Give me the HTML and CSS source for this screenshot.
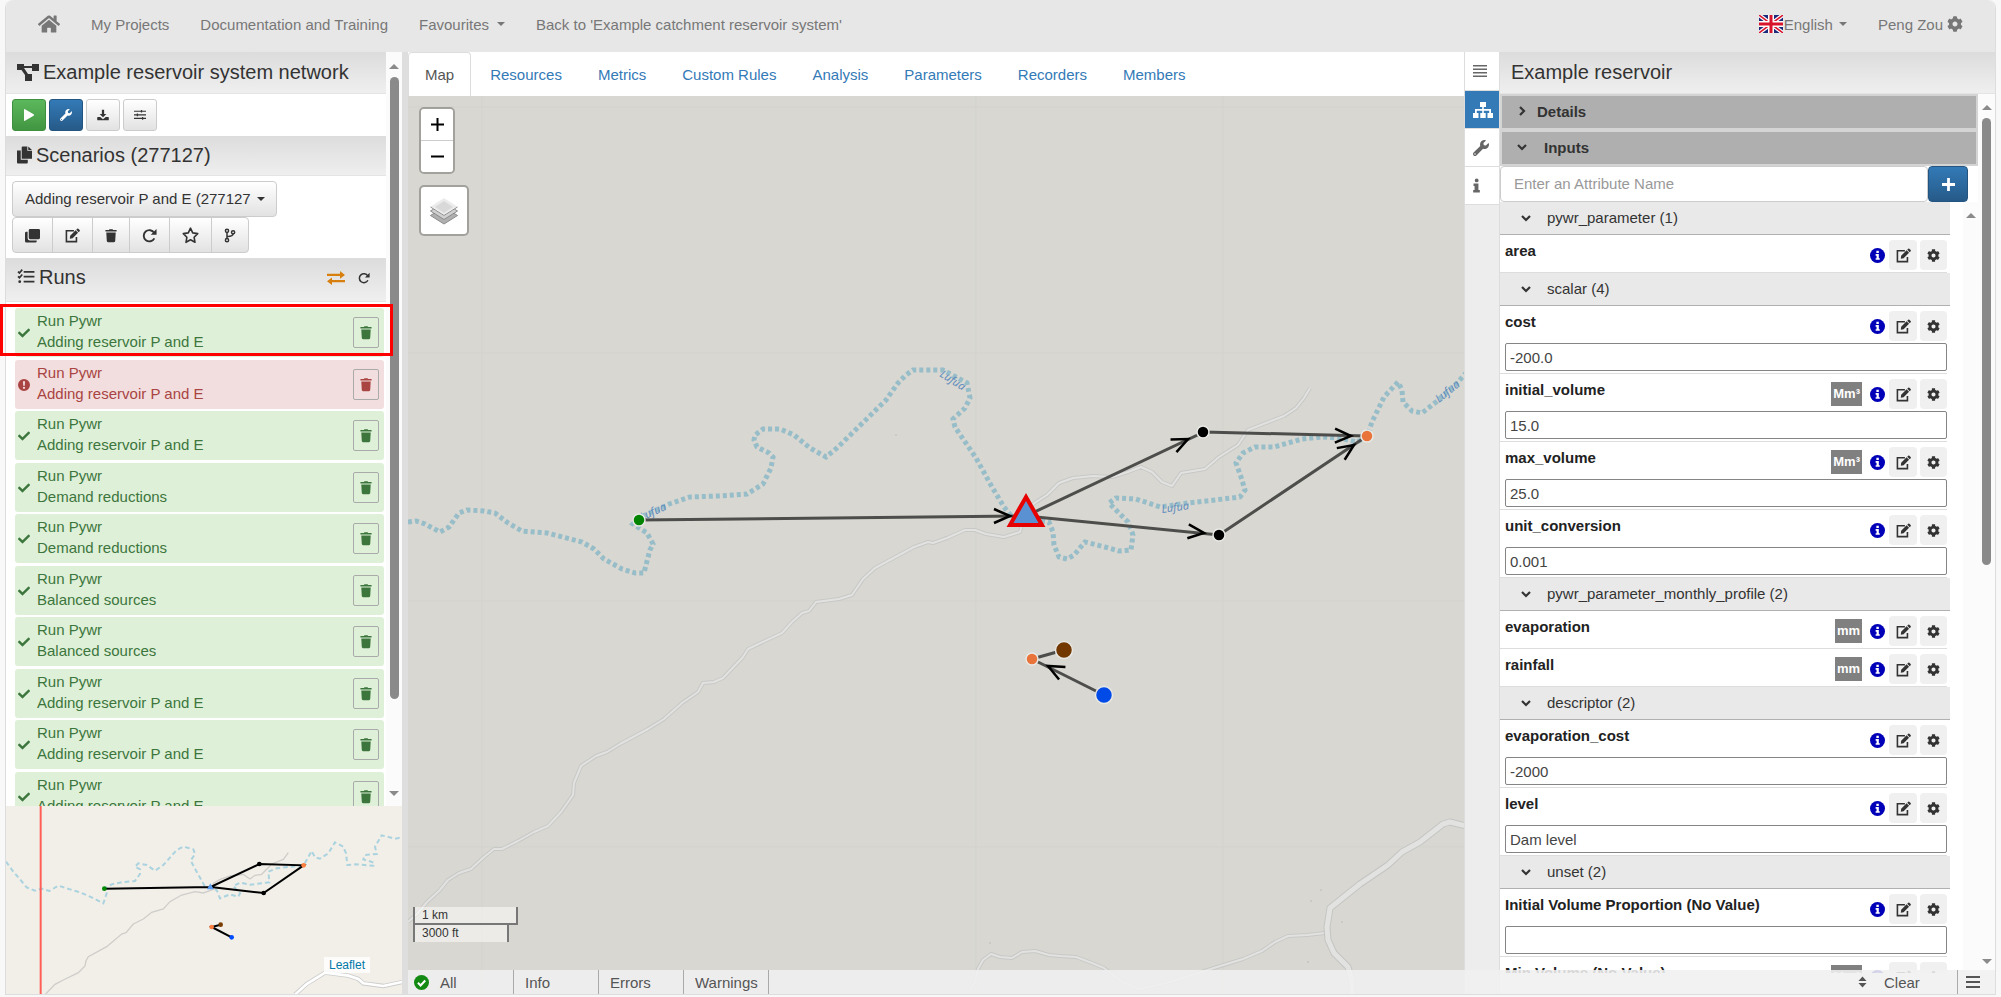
FILE: index.html
```html
<!DOCTYPE html>
<html lang="en">
<head>
<meta charset="utf-8">
<title>Example reservoir system network</title>
<link rel="stylesheet" href="styles.css">
</head>
<body>
<svg class="sprite" aria-hidden="true">
  <symbol id="i-home" viewBox="0 0 576 512"><path d="M280.37 148.26L96 300.11V464a16 16 0 0 0 16 16l112.06-.29a16 16 0 0 0 15.92-16V368a16 16 0 0 1 16-16h64a16 16 0 0 1 16 16v95.64a16 16 0 0 0 16 16.05L464 480a16 16 0 0 0 16-16V300L295.67 148.26a12.19 12.19 0 0 0-15.3 0zM571.6 251.47L488 182.56V44.05a12 12 0 0 0-12-12h-56a12 12 0 0 0-12 12v72.61L318.47 43a48 48 0 0 0-61 0L4.34 251.47a12 12 0 0 0-1.6 16.9l25.5 31A12 12 0 0 0 45.15 301l235.22-193.74a12.19 12.19 0 0 1 15.3 0L530.9 301a12 12 0 0 0 16.9-1.6l25.5-31a12 12 0 0 0-1.7-16.93z"/></symbol>
  <symbol id="i-gear" viewBox="0 0 512 512"><path d="M487.4 315.7l-42.6-24.6c4.3-23.2 4.3-47 0-70.2l42.6-24.6c4.9-2.8 7.1-8.6 5.5-14-11.1-35.6-30-67.8-54.7-94.6-3.8-4.1-10-5.1-14.8-2.3L380.8 110c-17.9-15.4-38.5-27.3-60.8-35.1V25.8c0-5.6-3.9-10.5-9.4-11.7-36.7-8.2-74.3-7.8-109.2 0-5.5 1.2-9.4 6.1-9.4 11.7V75c-22.2 7.9-42.8 19.8-60.8 35.1L88.7 85.5c-4.9-2.8-11-1.9-14.8 2.3-24.7 26.7-43.6 58.9-54.7 94.6-1.7 5.4.6 11.2 5.5 14L67.3 221c-4.3 23.2-4.3 47 0 70.2l-42.6 24.6c-4.9 2.8-7.1 8.6-5.5 14 11.1 35.6 30 67.8 54.7 94.6 3.8 4.1 10 5.1 14.8 2.3l42.6-24.6c17.9 15.4 38.5 27.3 60.8 35.1v49.2c0 5.6 3.9 10.5 9.4 11.7 36.7 8.2 74.3 7.8 109.2 0 5.5-1.2 9.4-6.1 9.4-11.7v-49.2c22.2-7.9 42.8-19.8 60.8-35.1l42.6 24.6c4.9 2.8 11 1.9 14.8-2.3 24.7-26.7 43.6-58.9 54.7-94.6 1.5-5.5-.7-11.3-5.6-14.1zM256 336c-44.1 0-80-35.9-80-80s35.9-80 80-80 80 35.9 80 80-35.9 80-80 80z"/></symbol>
  <symbol id="i-wrench" viewBox="0 0 512 512"><path d="M507.73 109.1c-2.24-9.03-13.54-12.09-20.12-5.51l-74.36 74.36-67.88-11.31-11.31-67.88 74.36-74.36c6.62-6.62 3.43-17.9-5.66-20.16-47.38-11.74-99.55.91-136.58 37.93-39.64 39.64-50.55 97.1-34.05 147.2L18.74 402.76c-24.99 24.99-24.99 65.51 0 90.5 24.99 24.99 65.51 24.99 90.5 0l213.21-213.21c50.12 16.71 107.47 5.68 147.37-34.22 37.07-37.07 49.7-89.32 37.91-136.73zM64 472c-13.25 0-24-10.75-24-24 0-13.26 10.75-24 24-24s24 10.74 24 24c0 13.25-10.75 24-24 24z"/></symbol>
  <symbol id="i-check" viewBox="0 0 512 512"><path d="M173.898 439.404l-166.4-166.4c-9.997-9.997-9.997-26.206 0-36.204l36.203-36.204c9.997-9.998 26.207-9.998 36.204 0L192 312.69 432.095 72.596c9.997-9.997 26.207-9.997 36.204 0l36.203 36.204c9.997 9.997 9.997 26.206 0 36.204l-294.4 294.401c-9.998 9.997-26.207 9.997-36.204-.001z"/></symbol>
  <symbol id="i-alert" viewBox="0 0 16 16"><path fill-rule="evenodd" d="M8 0a8 8 0 1 0 0 16A8 8 0 0 0 8 0zM6.6 3h2.8L9 9H7zM8 10.2a1.5 1.5 0 1 1 0 3 1.5 1.5 0 0 1 0-3z"/></symbol>
  <symbol id="i-okay" viewBox="0 0 16 16"><circle cx="8" cy="8" r="8"/><path d="M4.2 8.3l2.8 2.8 5-5.2" fill="none" stroke="#fff" stroke-width="2.2"/></symbol>
  <symbol id="i-about" viewBox="0 0 16 16"><circle cx="8" cy="8" r="8"/><path fill="#fff" d="M6.8 3h2.6v2.4H6.8zM6 6.4h3.4v4.4h1v1.8H6v-1.8h1V8.2H6z"/></symbol>
  <symbol id="i-info" viewBox="0 0 8 16"><path d="M4.2 0a2.2 2.2 0 1 1 0 4.4 2.2 2.2 0 0 1 0-4.4zM.6 5.8h5.6v7.4h1.6V16H.2v-2.8h1.6V8.6H.6z"/></symbol>
  <symbol id="i-network" viewBox="0 0 22 18"><path d="M0 1h7v2h8V1h7v7h-7V5H7l4 6h4v7H8v-6L4.500 7H0z"/></symbol>
  <symbol id="i-play" viewBox="0 0 10 12"><path d="M0 .6Q0-.3 1 .2l8.600 5.100q.8.700 0 1.400L1 11.800q-1 .4-1-.5z"/></symbol>
  <symbol id="i-download" viewBox="0 0 16 16"><path d="M6.500 1h3v5.500h3L8 11 3.500 6.500h3zM1 10.500h3.300L8 13.500l3.700-3H15q.7 0 .7.700v3q0 .8-.7.800H1q-.7 0-.7-.8v-3q0-.7.7-.7z"/></symbol>
  <symbol id="i-sliders" viewBox="0 0 16 14"><path fill="none" stroke="currentColor" stroke-width="1.600" d="M0 2h16M0 6.800h16M0 11.600h16M10 .2v3.600M4.500 5v3.600M11.500 9.800v3.600"/></symbol>
  <symbol id="i-copy" viewBox="0 0 16 18"><path d="M6 0h5v4.500h5V13H5V1q0-1 1-1zM12 0l4 3.700h-4zM0 4.200h4V14h7.500v3q0 1-1 1H1q-1 0-1-1z"/></symbol>
  <symbol id="i-clone" viewBox="0 0 16 16"><path d="M5.500 1h9Q16 1 16 2.500v8q0 1.500-1.500 1.500h-9Q4 12 4 10.500v-8Q4 1 5.500 1zM0 5.500Q0 4 1.500 4H2.800v7Q2.800 13.200 5 13.200h7.500v.8q0 1.500-1.500 1.500H1.500Q0 15.500 0 14z"/></symbol>
  <symbol id="i-edit" viewBox="0 0 16 16"><path fill="none" stroke="currentColor" stroke-width="1.700" d="M9.500 3H1.500v11.500h10.700V9.500"/><path d="M5.500 8.300l5.800-5.800 2.600 2.600-5.800 5.800-3 .5zM12 1.800l1-1q.6-.5 1.200 0l1.400 1.400q.5.600 0 1.200l-1 1z"/></symbol>
  <symbol id="i-trash" viewBox="0 0 14 16"><path d="M.5 1.500h4L5.200.6h3.600l.7.900h4v1.800H.5zM1.500 4.500h11l-.6 10q-.1 1.300-1.400 1.300h-7q-1.300 0-1.400-1.300z"/></symbol>
  <symbol id="i-redo" viewBox="0 0 16 16"><path fill="none" stroke="currentColor" stroke-width="2" d="M13 5.200A6 6 0 1 0 13.200 11"/><path d="M15.500 1v6.300H9.300z"/></symbol>
  <symbol id="i-star" viewBox="0 0 17 17"><path fill="none" stroke="currentColor" stroke-width="1.600" stroke-linejoin="round" d="M8.500 1.200l2.200 4.700 5 .7-3.600 3.600.9 5.100-4.500-2.500L4 15.300l.9-5.100L1.300 6.600l5-.7z"/></symbol>
  <symbol id="i-branch" viewBox="0 0 12 16"><g fill="none" stroke="currentColor" stroke-width="1.600"><circle cx="2.800" cy="3" r="1.700"/><circle cx="2.800" cy="13" r="1.700"/><circle cx="9.300" cy="4.500" r="1.700"/><path d="M2.800 4.700v6.600M9.300 6.200q0 2.800-6.300 3"/></g></symbol>
  <symbol id="i-tasks" viewBox="0 0 18 16"><path fill="none" stroke="currentColor" stroke-width="1.800" d="M6.500 3H18M6.500 8.200H18M6.500 13.500H18M.5 2.700l1.500 1.500L5 .7M.5 7.900l1.500 1.500 3-3.500"/><circle cx="2.300" cy="13.500" r="1.500"/></symbol>
  <symbol id="i-swap" viewBox="0 0 18 14"><path d="M0 2.800h13V0l5 3.900-5 3.900V5H0zM18 9H5V6.400L0 10.200 5 14v-2.800h13z"/></symbol>
  <symbol id="i-sitemap" viewBox="0 0 20 16"><path d="M7 0h6v5h-2.200v2H18v4h2v5h-5.500v-5h1.700V8.700h-5.400V11h1.900v5H7.300v-5h1.900V8.700H3.800V11h1.700v5H0v-5h2V7h7.200V5H7z"/></symbol>
  <symbol id="i-lines" viewBox="0 0 14 12"><path d="M0 0h14v1.600H0zM0 3.500h14v1.600H0zM0 7h14v1.600H0zM0 10.400h14V12H0z"/></symbol>
  <symbol id="i-bars" viewBox="0 0 14 12"><path d="M0 0h14v2H0zM0 5h14v2H0zM0 10h14v2H0z"/></symbol>
  <symbol id="i-plus" viewBox="0 0 14 14"><path d="M5.500 0h3v5.500H14v3H8.500V14h-3V8.500H0v-3h5.500z"/></symbol>
  <symbol id="i-down" viewBox="0 0 10 10"><path fill="none" stroke="currentColor" stroke-width="2.200" d="M1 3l4 4 4-4"/></symbol>
  <symbol id="i-right" viewBox="0 0 10 10"><path fill="none" stroke="currentColor" stroke-width="2.200" d="M3 1l4 4-4 4"/></symbol>
  <symbol id="i-sort" viewBox="0 0 10 12"><path d="M5 0l4.500 5h-9zM5 12L.5 7h9z"/></symbol>
</svg>

<div class="app">
  <header class="topbar">
    <nav class="topnav">
      <a class="toplink" href="#" aria-label="Home"><svg class="ic ic-home"><use href="#i-home"/></svg></a>
      <a class="toplink" href="#">My Projects</a>
      <a class="toplink" href="#">Documentation and Training</a>
      <button class="toplink" type="button">Favourites <span class="caret"></span></button>
      <a class="toplink" href="#">Back to 'Example catchment reservoir system'</a>
    </nav>
    <nav class="topnav">
      <button class="toplink lang" type="button">
        <svg class="flag" viewBox="0 0 24 18"><path fill="#1b2a7b" d="M0 0h24v18H0z"/><path stroke="#fff" stroke-width="4" d="M0 0l24 18M24 0L0 18"/><path stroke="#d8142c" stroke-width="1.500" d="M0 0l24 18M24 0L0 18"/><path stroke="#fff" stroke-width="6" d="M12 0v18M0 9h24"/><path stroke="#d8142c" stroke-width="3" d="M12 0v18M0 9h24"/></svg>English <span class="caret"></span>
      </button>
      <button class="toplink user" type="button">Peng Zou <svg class="ic ic-16"><use href="#i-gear"/></svg></button>
    </nav>
  </header>

  <main class="workspace">
    <aside class="sidebar">
      <div class="side-scroll">
        <div class="side-body">
          <h1 class="head"><svg class="ic ic-net"><use href="#i-network"/></svg>Example reservoir system network</h1>
          <div class="tools">
            <button class="btn btn-green" type="button" aria-label="Run"><svg class="ic ic-play"><use href="#i-play"/></svg></button>
            <button class="btn btn-blue" type="button" aria-label="Tools"><svg class="ic ic-12"><use href="#i-wrench"/></svg></button>
            <button class="btn" type="button" aria-label="Download"><svg class="ic ic-12"><use href="#i-download"/></svg></button>
            <button class="btn" type="button" aria-label="Settings"><svg class="ic ic-12"><use href="#i-sliders"/></svg></button>
          </div>
          <h2 class="head head-scen"><svg class="ic ic-copy"><use href="#i-copy"/></svg>Scenarios (277127)</h2>
          <div class="scenario">
            <div class="picker">
              <select class="picker-box" aria-label="Scenario"><option>Adding reservoir P and E (277127</option></select>
              <span class="caret picker-caret"></span>
            </div>
            <div class="btn-group">
              <button class="gbtn" type="button" aria-label="Clone"><svg class="ic ic-15"><use href="#i-clone"/></svg></button>
              <button class="gbtn" type="button" aria-label="Edit"><svg class="ic ic-15"><use href="#i-edit"/></svg></button>
              <button class="gbtn" type="button" aria-label="Delete"><svg class="ic ic-slim"><use href="#i-trash"/></svg></button>
              <button class="gbtn" type="button" aria-label="Refresh"><svg class="ic ic-15"><use href="#i-redo"/></svg></button>
              <button class="gbtn" type="button" aria-label="Favourite"><svg class="ic ic-17"><use href="#i-star"/></svg></button>
              <button class="gbtn" type="button" aria-label="Branch"><svg class="ic ic-slim"><use href="#i-branch"/></svg></button>
            </div>
          </div>
          <h2 class="head head-runs"><svg class="ic ic-tasks"><use href="#i-tasks"/></svg>Runs
            <span class="head-actions"><button class="bare orange" type="button" aria-label="Compare"><svg class="ic ic-swap"><use href="#i-swap"/></svg></button><button class="bare" type="button" aria-label="Reload runs"><svg class="ic ic-12"><use href="#i-redo"/></svg></button></span>
          </h2>
          <ul class="runs">
            <li class="run"><svg class="ic run-ic"><use href="#i-check"/></svg><span class="run-text">Run Pywr<br>Adding reservoir P and E</span><button class="del" type="button" aria-label="Delete run"><svg class="ic ic-slim"><use href="#i-trash"/></svg></button><span class="highlight"></span></li>
            <li class="run failed"><svg class="ic run-ic"><use href="#i-alert"/></svg><span class="run-text">Run Pywr<br>Adding reservoir P and E</span><button class="del" type="button" aria-label="Delete run"><svg class="ic ic-slim"><use href="#i-trash"/></svg></button></li>
            <li class="run"><svg class="ic run-ic"><use href="#i-check"/></svg><span class="run-text">Run Pywr<br>Adding reservoir P and E</span><button class="del" type="button" aria-label="Delete run"><svg class="ic ic-slim"><use href="#i-trash"/></svg></button></li>
            <li class="run"><svg class="ic run-ic"><use href="#i-check"/></svg><span class="run-text">Run Pywr<br>Demand reductions</span><button class="del" type="button" aria-label="Delete run"><svg class="ic ic-slim"><use href="#i-trash"/></svg></button></li>
            <li class="run"><svg class="ic run-ic"><use href="#i-check"/></svg><span class="run-text">Run Pywr<br>Demand reductions</span><button class="del" type="button" aria-label="Delete run"><svg class="ic ic-slim"><use href="#i-trash"/></svg></button></li>
            <li class="run"><svg class="ic run-ic"><use href="#i-check"/></svg><span class="run-text">Run Pywr<br>Balanced sources</span><button class="del" type="button" aria-label="Delete run"><svg class="ic ic-slim"><use href="#i-trash"/></svg></button></li>
            <li class="run"><svg class="ic run-ic"><use href="#i-check"/></svg><span class="run-text">Run Pywr<br>Balanced sources</span><button class="del" type="button" aria-label="Delete run"><svg class="ic ic-slim"><use href="#i-trash"/></svg></button></li>
            <li class="run"><svg class="ic run-ic"><use href="#i-check"/></svg><span class="run-text">Run Pywr<br>Adding reservoir P and E</span><button class="del" type="button" aria-label="Delete run"><svg class="ic ic-slim"><use href="#i-trash"/></svg></button></li>
            <li class="run"><svg class="ic run-ic"><use href="#i-check"/></svg><span class="run-text">Run Pywr<br>Adding reservoir P and E</span><button class="del" type="button" aria-label="Delete run"><svg class="ic ic-slim"><use href="#i-trash"/></svg></button></li>
            <li class="run"><svg class="ic run-ic"><use href="#i-check"/></svg><span class="run-text">Run Pywr<br>Adding reservoir P and E</span><button class="del" type="button" aria-label="Delete run"><svg class="ic ic-slim"><use href="#i-trash"/></svg></button></li>
          </ul>
        </div>
        <div class="bar side-bar"><span class="arrow-up"></span><span class="thumb"></span><span class="arrow-down"></span></div>
      </div>
      <div class="minimap">
        <svg class="fill" viewBox="18 618 1188 564" preserveAspectRatio="xMinYMin slice" fill="none">
          <path class="mini-road" d="M137 1182L165 1153L190 1140L235 1118L255 1098L258 1082L265 1070L320 1040L365 1002L378 998L400 972L430 957L455 937L490 927L510 905L545 885L585 875L610 879L640 868L640 850L660 838L690 828L730 823L750 837L765 826L785 823L800 808L815 792L850 778L865 758"/>
          <path stroke="#ccc" stroke-width="13" d="M885 1184L920 1152L975 1118L1045 1127L1075 1137L1090 1150L1150 1158L1206 1146"/>
          <path stroke="#fff" stroke-width="8" d="M885 1184L920 1152L975 1118L1045 1127L1075 1137L1090 1150L1150 1158L1206 1146"/>
          <path class="mini-river" d="M18 785L40 815L60 838L80 862L105 872L125 866L148 873L175 857L210 868L240 877L275 892L310 910L320 880L313 866L335 853L370 846L405 843L420 822L420 808L405 800L415 790L440 795L465 812L490 795L530 750L550 740L580 748L585 762L572 782L590 815L615 860L650 870L660 895L690 883L715 890L720 880L700 858L720 848L750 854L808 847L805 815L830 805L911 796L935 753L945 772L960 776L985 760L1005 727L1030 740L1038 760L1042 795L1065 793L1120 797L1122 788L1090 778L1095 765L1130 762L1125 740L1145 706L1185 716L1200 713"/>
          <path stroke="#000" stroke-width="6" d="M313 866L632 861L778 792L911 796L791 879L632 861M662 974L635 981L695 1012"/>
          <circle cx="313" cy="866" r="7" fill="#080"/><circle cx="778" cy="792" r="7" fill="#000"/><circle cx="791" cy="879" r="7" fill="#000"/><circle cx="911" cy="796" r="7" fill="#ff7f3f"/><circle cx="635" cy="981" r="7" fill="#ff7f3f"/><circle cx="662" cy="974" r="7" fill="#7a3c00"/><circle cx="695" cy="1012" r="7" fill="#004cff"/><path fill="#5c9df0" d="M631 850l10 18h-20z"/>
          <path stroke="#ff5f57" stroke-width="6" d="M122 618v564"/>
        </svg>
        <a class="leaflet" href="#">Leaflet</a>
      </div>
    </aside>

    <div class="splitter"></div>

    <section class="center">
      <nav class="tabs">
        <a class="tab active" href="#">Map</a><a class="tab" href="#">Resources</a><a class="tab" href="#">Metrics</a><a class="tab" href="#">Custom Rules</a><a class="tab" href="#">Analysis</a><a class="tab" href="#">Parameters</a><a class="tab" href="#">Recorders</a><a class="tab" href="#">Members</a>
      </nav>
      <div class="map">
        <svg class="fill" viewBox="408 96 1056 898" preserveAspectRatio="xMinYMin slice" fill="none">
          <defs>
            <path id="road" d="M408 922L418 913L427 902L439 891L448 880L459 873L471 869L484 857L494 849L502 849L518 841L534 832L548 826L561 812L573 795L574 783L581 766L596 756L607 752L620 744L648 729L664 719L682 703L698 692L703 683L714 682L723 678L743 657L748 649L782 633L792 622L802 613L809 611L816 602L839 599L852 595L863 579L875 568L914 547L928 542L933 543L947 538L965 530L975 530L986 534L1004 537L1020 532L1026 510L1036 502L1047 495L1059 483L1073 478L1093 476L1112 477L1128 472L1141 467L1152 472L1162 482L1172 486L1181 473L1205 469L1219 457L1238 445L1248 430L1284 416L1296 408L1304 398L1310 388M1325 933L1307 935L1288 936L1275 942L1262 951L1243 959L1217 967L1170 982L1140 989L1122 982L1104 968L1092 963L1076 957L1060 956L1049 955L1035 951L1022 952L1012 958L1000 957L991 954L983 960L978 969L975 982L970 990"/>
            <path id="highway" d="M1466 826L1450 822L1443 824L1420 842L1402 852L1388 865L1360 884L1330 908L1327 927L1328 940L1334 953L1348 967L1352 980L1352 994"/>
          </defs>
          <path stroke="#d3d3cd" d="M482 96v898M976 96v898M1223 96v898M408 107h1056M408 353h1056M408 601h1056M408 847h1056"/>
          <g fill="#c4c4c0" stroke="none"><circle cx="896" cy="435" r="1"/><circle cx="1321" cy="890" r="1"/><circle cx="1311" cy="901" r="1"/><circle cx="1342" cy="922" r="1"/><circle cx="1308" cy="962" r="1"/><circle cx="990" cy="943" r="1"/></g>
          <g stroke-linejoin="round">
            <use href="#road" stroke="#c8c8c7" stroke-width="4"/>
            <use href="#road" stroke="#e2e2e1" stroke-width="2"/>
            <use href="#highway" stroke="#c4c4c3" stroke-width="7"/>
            <use href="#highway" stroke="#e2e2e1" stroke-width="5"/>
          </g>
          <path class="river" d="M408 522L416 521L425 524L440 532L449 527L459 513L467 510L484 511L495 513L508 523L522 531L547 533L582 542L594 549L604 559L622 569L635 573L644 573L647 561L650 550L653 544L647 533L633 524L639 518L669 504L690 497L718 496L747 494L763 484L771 468L773 457L769 453L757 447L754 440L755 435L763 429L780 429L794 435L810 448L826 457L837 448L886 400L898 383L906 375L913 370L943 370L967 383L970 398L965 408L953 419L955 427L976 458L992 487L1004 507L1012 517L1049 522L1053 532L1054 545L1059 557L1067 559L1074 555L1085 542L1105 547L1119 551L1131 550L1133 535L1128 522L1116 510L1109 503L1116 498L1136 499L1160 507L1188 503L1215 500L1240 497L1245 490L1241 477L1236 463L1243 453L1255 447L1274 447L1302 439L1322 437L1339 438L1357 442L1367 436L1372 422L1384 397L1398 382L1402 390L1403 402L1412 411L1422 413L1436 402L1457 383L1466 373"/>
          <g class="river-name">
            <text transform="translate(939 376) rotate(32)">Lufua</text>
            <text transform="translate(642 521) rotate(-25)">Lufua</text>
            <text transform="translate(1162 513) rotate(-8)">Lufua</text>
            <text transform="translate(1439 403) rotate(-39)">Lufua</text>
          </g>
          <path stroke="#4d4d4b" stroke-width="3" d="M639 520L1026 516L1204 432L1367 436M1026 516L1219 535L1367 436M1064 650L1032 659L1104 695"/>
          <g stroke="#000" stroke-width="2.500">
            <path transform="translate(1010 516)" d="M-16-7L0 0L-16 7"/>
            <path transform="translate(1188 439) rotate(-25)" d="M-16-7L0 0L-16 7"/>
            <path transform="translate(1204 533) rotate(6)" d="M-16-7L0 0L-16 7"/>
            <path transform="translate(1351 436) rotate(1)" d="M-16-7L0 0L-16 7"/>
            <path transform="translate(1354 445) rotate(-34)" d="M-16-7L0 0L-16 7"/>
            <path transform="translate(1048 666) rotate(207)" d="M-16-7L0 0L-16 7"/>
          </g>
          <g stroke="#e9e9e6" stroke-width="1.500">
            <circle cx="639" cy="520" r="6" fill="#008400"/><circle cx="1203" cy="432" r="6" fill="#000"/><circle cx="1219" cy="535" r="6" fill="#000"/><circle cx="1367" cy="436" r="6" fill="#e8743b"/><circle cx="1032" cy="659" r="6" fill="#e8743b"/><circle cx="1064" cy="650" r="8.500" fill="#733800"/><circle cx="1104" cy="695" r="8.500" fill="#004be8"/>
          </g>
          <path fill="#5a91d3" stroke="#e60000" stroke-width="4" d="M1026 497l16 28h-32z"/>
        </svg>
        <div class="map-controls">
          <div class="zoomer"><button class="zoom-btn" type="button" aria-label="Zoom in"><svg class="ic ic-13"><path d="M0 6.500h13M6.500 0v13" stroke="#000" stroke-width="2"/></svg></button><button class="zoom-btn" type="button" aria-label="Zoom out"><svg class="ic ic-13"><path d="M0 6.500h13" stroke="#000" stroke-width="2"/></svg></button></div>
          <button class="layers" type="button" aria-label="Layers"><svg class="layers-ic" viewBox="0 0 28 28"><path fill="#b0b0b0" stroke="#8b8b8b" d="M0.500 18.500L14 27l13.500-8.500L14 10z"/><path fill="#d0d0d0" stroke="#8b8b8b" d="M0.500 14L14 22.500 27.500 14 14 5.500z"/><path fill="#ececec" stroke="#fff" d="M0 9.500L14 18.500 28 9.500 14 .5z"/><path fill="#d9d9d9" d="M5 10l9-6 9 6-9 6z"/><path fill="none" stroke="#8b8b8b" d="M0.500 10L14 18.500 27.500 10"/></svg></button>
        </div>
        <div class="scale"><div class="scale-line km">1 km</div><div class="scale-line ft">3000 ft</div></div>
      </div>
    </section>

    <aside class="inspector">
      <nav class="rail">
        <button class="rail-btn" type="button" aria-label="Menu"><svg class="ic ic-lines"><use href="#i-lines"/></svg></button>
        <button class="rail-btn on" type="button" aria-label="Network"><svg class="ic ic-site"><use href="#i-sitemap"/></svg></button>
        <button class="rail-btn" type="button" aria-label="Tools"><svg class="ic ic-16"><use href="#i-wrench"/></svg></button>
        <button class="rail-btn" type="button" aria-label="Information"><svg class="ic ic-info"><use href="#i-info"/></svg></button>
      </nav>
      <div class="panel">
        <h2 class="head">Example reservoir</h2>
        <div class="panel-scroll">
          <div class="panel-body">
            <button class="fold" type="button"><svg class="ic ic-10"><use href="#i-right"/></svg>Details</button>
            <button class="fold open" type="button"><svg class="ic ic-10"><use href="#i-down"/></svg>Inputs</button>
            <div class="add"><input class="add-box" type="text" placeholder="Enter an Attribute Name" aria-label="Attribute name"><button class="add-btn" type="button" aria-label="Add attribute"><svg class="ic ic-13"><use href="#i-plus"/></svg></button></div>
            <div class="attrs">
              <div class="attr-list">
                <button class="group" type="button"><svg class="ic ic-10"><use href="#i-down"/></svg>pywr_parameter (1)</button>
                <div class="attr"><div class="attr-top"><span class="name">area</span><svg class="ic about"><use href="#i-about"/></svg><button class="act edit" type="button" aria-label="Edit"><svg class="ic ic-15"><use href="#i-edit"/></svg></button><button class="act" type="button" aria-label="Options"><svg class="ic ic-13"><use href="#i-gear"/></svg></button></div></div>
                <button class="group" type="button"><svg class="ic ic-10"><use href="#i-down"/></svg>scalar (4)</button>
                <div class="attr"><div class="attr-top"><label class="name" for="f1">cost</label><svg class="ic about"><use href="#i-about"/></svg><button class="act edit" type="button" aria-label="Edit"><svg class="ic ic-15"><use href="#i-edit"/></svg></button><button class="act" type="button" aria-label="Options"><svg class="ic ic-13"><use href="#i-gear"/></svg></button></div><input class="field" id="f1" type="text" value="-200.0"></div>
                <div class="attr"><div class="attr-top"><label class="name" for="f2">initial_volume</label><span class="unit">Mm³</span><svg class="ic about"><use href="#i-about"/></svg><button class="act edit" type="button" aria-label="Edit"><svg class="ic ic-15"><use href="#i-edit"/></svg></button><button class="act" type="button" aria-label="Options"><svg class="ic ic-13"><use href="#i-gear"/></svg></button></div><input class="field" id="f2" type="text" value="15.0"></div>
                <div class="attr"><div class="attr-top"><label class="name" for="f3">max_volume</label><span class="unit">Mm³</span><svg class="ic about"><use href="#i-about"/></svg><button class="act edit" type="button" aria-label="Edit"><svg class="ic ic-15"><use href="#i-edit"/></svg></button><button class="act" type="button" aria-label="Options"><svg class="ic ic-13"><use href="#i-gear"/></svg></button></div><input class="field" id="f3" type="text" value="25.0"></div>
                <div class="attr"><div class="attr-top"><label class="name" for="f4">unit_conversion</label><svg class="ic about"><use href="#i-about"/></svg><button class="act edit" type="button" aria-label="Edit"><svg class="ic ic-15"><use href="#i-edit"/></svg></button><button class="act" type="button" aria-label="Options"><svg class="ic ic-13"><use href="#i-gear"/></svg></button></div><input class="field" id="f4" type="text" value="0.001"></div>
                <button class="group" type="button"><svg class="ic ic-10"><use href="#i-down"/></svg>pywr_parameter_monthly_profile (2)</button>
                <div class="attr"><div class="attr-top"><span class="name">evaporation</span><span class="unit">mm</span><svg class="ic about"><use href="#i-about"/></svg><button class="act edit" type="button" aria-label="Edit"><svg class="ic ic-15"><use href="#i-edit"/></svg></button><button class="act" type="button" aria-label="Options"><svg class="ic ic-13"><use href="#i-gear"/></svg></button></div></div>
                <div class="attr"><div class="attr-top"><span class="name">rainfall</span><span class="unit">mm</span><svg class="ic about"><use href="#i-about"/></svg><button class="act edit" type="button" aria-label="Edit"><svg class="ic ic-15"><use href="#i-edit"/></svg></button><button class="act" type="button" aria-label="Options"><svg class="ic ic-13"><use href="#i-gear"/></svg></button></div></div>
                <button class="group" type="button"><svg class="ic ic-10"><use href="#i-down"/></svg>descriptor (2)</button>
                <div class="attr"><div class="attr-top"><label class="name" for="f5">evaporation_cost</label><svg class="ic about"><use href="#i-about"/></svg><button class="act edit" type="button" aria-label="Edit"><svg class="ic ic-15"><use href="#i-edit"/></svg></button><button class="act" type="button" aria-label="Options"><svg class="ic ic-13"><use href="#i-gear"/></svg></button></div><input class="field" id="f5" type="text" value="-2000"></div>
                <div class="attr"><div class="attr-top"><label class="name" for="f6">level</label><svg class="ic about"><use href="#i-about"/></svg><button class="act edit" type="button" aria-label="Edit"><svg class="ic ic-15"><use href="#i-edit"/></svg></button><button class="act" type="button" aria-label="Options"><svg class="ic ic-13"><use href="#i-gear"/></svg></button></div><input class="field" id="f6" type="text" value="Dam level"></div>
                <button class="group" type="button"><svg class="ic ic-10"><use href="#i-down"/></svg>unset (2)</button>
                <div class="attr"><div class="attr-top"><label class="name" for="f7">Initial Volume Proportion (No Value)</label><svg class="ic about"><use href="#i-about"/></svg><button class="act edit" type="button" aria-label="Edit"><svg class="ic ic-15"><use href="#i-edit"/></svg></button><button class="act" type="button" aria-label="Options"><svg class="ic ic-13"><use href="#i-gear"/></svg></button></div><input class="field" id="f7" type="text" value=""></div>
                <div class="attr"><div class="attr-top"><label class="name" for="f8">Min Volume (No Value)</label><span class="unit">Mm³</span><svg class="ic about"><use href="#i-about"/></svg><button class="act edit" type="button" aria-label="Edit"><svg class="ic ic-15"><use href="#i-edit"/></svg></button><button class="act" type="button" aria-label="Options"><svg class="ic ic-13"><use href="#i-gear"/></svg></button></div><input class="field" id="f8" type="text" value=""></div>
              </div>
              <div class="bar inner-bar"><span class="arrow-up"></span></div>
            </div>
          </div>
          <div class="bar panel-bar"><span class="arrow-up"></span><span class="thumb"></span><span class="arrow-down"></span></div>
        </div>
      </div>
    </aside>

    <footer class="status">
      <button class="stat first" type="button"><svg class="ic ok"><use href="#i-okay"/></svg>All</button>
      <button class="stat" type="button">Info</button>
      <button class="stat" type="button">Errors</button>
      <button class="stat" type="button">Warnings</button>
      <span class="grow"></span>
      <button class="stat sort" type="button" aria-label="Resize"><svg class="ic ic-sort"><use href="#i-sort"/></svg></button>
      <button class="stat clear" type="button">Clear</button>
      <button class="stat more" type="button" aria-label="Log menu"><svg class="ic ic-lines"><use href="#i-bars"/></svg></button>
    </footer>
  </main>
</div>
</body>
</html>
```

FILE: styles.css
```css
* { box-sizing: border-box; }
html, body { height: 100%; }
body {
  margin: 0;
  padding: 0 5px 2px;
  background: #f8f8f8;
  color: #333;
  font: 15px/21px "Liberation Sans", Arial, sans-serif;
  overflow: hidden;
}
button, input, select { font: inherit; color: inherit; margin: 0; }
button { background: none; border: 0; padding: 0; cursor: pointer; }
a { text-decoration: none; color: inherit; }
.sprite { position: absolute; width: 0; height: 0; }
.ic { display: block; flex: none; fill: currentColor; overflow: visible; }
.ic-home { width: 22px; height: 20px; }
.ic-net { width: 22px; height: 18px; margin-right: 4px; }
.ic-play { width: 10px; height: 12px; }
.ic-10 { width: 10px; height: 10px; }
.ic-12 { width: 12px; height: 12px; }
.ic-13 { width: 13px; height: 13px; }
.ic-15 { width: 15px; height: 15px; }
.ic-16 { width: 16px; height: 16px; }
.ic-17 { width: 17px; height: 17px; }
.ic-slim { width: 12px; height: 15px; }
.ic-copy { width: 15px; height: 18px; margin-right: 4px; }
.ic-tasks { width: 18px; height: 15px; margin-right: 4px; }
.ic-swap { width: 18px; height: 14px; }
.ic-site { width: 20px; height: 16px; }
.ic-lines { width: 14px; height: 12px; }
.ic-info { width: 7px; height: 15px; }
.ic-sort { width: 9px; height: 12px; }
.caret {
  display: inline-block;
  border: 4px solid transparent;
  border-top-color: currentColor;
  border-bottom: 0;
}
.fill { display: block; width: 100%; height: 100%; }
.grow { flex: 1; }

.app {
  display: flex;
  flex-direction: column;
  height: 100%;
  border: 1px solid #ddd;
  border-top: 0;
  border-radius: 8px 8px 0 0;
  background: #fff;
}
.topbar {
  display: flex;
  justify-content: space-between;
  flex: none;
  height: 52px;
  padding: 0 16px;
  border-radius: 8px 8px 0 0;
  background: #e7e7e7;
  color: #777;
}
.topnav { display: flex; align-items: stretch; }
.topnav .toplink { display: flex; align-items: center; padding: 0 16px 4px 15px; }
.topnav .toplink:first-child { padding-left: 16px; }
.toplink .caret { margin-left: 8px; }
.flag { width: 24px; height: 18px; margin-right: 1px; }
.lang .caret { margin-left: 6px; }
.user svg { margin-left: 4px; }

.workspace {
  position: relative;
  display: grid;
  grid-template-columns: 396px 6px minmax(0, 1fr) 531px;
  grid-template-rows: minmax(0, 1fr);
  flex: 1;
  min-height: 0;
}
.splitter { background: #dedede; }

.head {
  display: flex;
  align-items: center;
  height: 42px;
  margin: 0;
  padding: 0 11px 2px;
  font-size: 20px;
  line-height: 24px;
  font-weight: 400;
  background: linear-gradient(#dcdcdc, #efefef);
  border-bottom: 1px solid #e4e4e4;
}
.head-scen { height: 40px; }
.head-runs { height: 44px; padding-bottom: 6px; }
.head-actions { display: flex; align-items: center; gap: 13px; margin-left: auto; padding: 3px 5px 0 0; }
.bare.orange { color: #d8800f; }

.sidebar { display: flex; flex-direction: column; min-height: 0; }
.side-scroll { display: flex; flex: 1; min-height: 0; overflow-y: clip; }
.side-body { flex: 1; min-width: 0; }
.bar {
  display: flex;
  flex-direction: column;
  align-items: center;
  flex: none;
  background: #fbfbfb;
}
.arrow-up, .arrow-down { width: 0; height: 0; border: 5px solid transparent; flex: none; }
.arrow-up { border-top: 0; border-bottom-color: #8a8a8a; }
.arrow-down { border-bottom: 0; border-top-color: #8a8a8a; margin-top: auto; }
.thumb { width: 9px; flex: none; border-radius: 5px; background: #8a8a8a; margin-top: 8px; }
.side-bar { width: 16px; padding: 12px 0 10px; }
.side-bar .thumb { height: 85%; }

.tools { display: flex; gap: 3px; height: 42px; padding: 5px 6px; }
.btn {
  display: flex;
  align-items: center;
  justify-content: center;
  width: 34px;
  height: 32px;
  border: 1px solid #ccc;
  border-radius: 3px;
  background: linear-gradient(#fff, #e2e2e2);
}
.btn-green { background: linear-gradient(#5cb85c, #419641); border-color: #3e8f3e; color: #fff; }
.btn-blue { background: linear-gradient(#337ab7, #265a88); border-color: #245580; color: #fff; }

.scenario { padding: 5px 6px; }
.picker { position: relative; width: 265px; }
.picker-box {
  appearance: none;
  display: block;
  width: 100%;
  height: 36px;
  padding: 0 20px 1px 12px;
  border: 1px solid #ccc;
  border-radius: 4px;
  background: linear-gradient(#fff, #e2e2e2);
}
.picker-caret { position: absolute; right: 12px; top: 16px; pointer-events: none; }
.btn-group {
  display: inline-flex;
  vertical-align: top;
  height: 36px;
  border: 1px solid #ccc;
  border-radius: 4px;
  background: linear-gradient(#fff, #e2e2e2);
}
.gbtn { display: flex; align-items: center; padding: 0 12px; }
.gbtn + .gbtn { border-left: 1px solid #ccc; }

.runs { list-style: none; margin: 0; padding: 6px 2px 0 9px; }
.run {
  position: relative;
  display: flex;
  align-items: center;
  height: 49px;
  margin-bottom: 3px;
  padding: 0 5px 0 3px;
  border-radius: 3px;
  background: #dff0d8;
  color: #3c763d;
}
.run:nth-child(even) { margin-bottom: 2px; }
.run.failed { background: #f2dede; color: #a94442; }
.run-ic { width: 12px; height: 12px; }
.run-text { flex: 1; padding: 0 0 3px 7px; }
.del {
  display: flex;
  align-items: center;
  justify-content: center;
  width: 26px;
  height: 31px;
  border: 1px solid #aaa;
  border-radius: 2px;
}
.highlight {
  position: absolute;
  z-index: 2;
  inset: -4px -9px 1px -15px;
  border: 3px solid #f00;
  pointer-events: none;
}

.minimap { position: relative; flex: none; height: 188px; background: #f2efe9; }
.mini-road { stroke: #cfcdc9; stroke-width: 4; }
.mini-river { stroke: #aad3df; stroke-width: 6; stroke-dasharray: 14 9; }
.leaflet {
  position: absolute;
  right: 32px;
  bottom: 21px;
  padding: 0 5px;
  background: rgba(255, 255, 255, .8);
  color: #0078a8;
  font-size: 12px;
  line-height: 16px;
}

.center { display: flex; flex-direction: column; min-width: 0; }
.tabs { display: flex; flex: none; height: 44px; background: #fff; }
.tab {
  display: flex;
  align-items: center;
  margin-right: 2px;
  padding: 0 16px;
  border: 1px solid transparent;
  border-bottom: 0;
  color: #337ab7;
}
.tab.active { color: #555; border-color: #ddd; border-radius: 4px 4px 0 0; }
.map { position: relative; flex: 1; min-height: 0; background: #d8d7d1; }
.river { stroke: #97bdc9; stroke-width: 5; stroke-dasharray: 4 3; }
.river-name {
  fill: #5f8cbd;
  font: italic 11px "Noto Sans", sans-serif;
}
.map-controls { position: absolute; left: 11px; top: 11px; }
.zoomer, .layers { border: 2px solid rgba(0, 0, 0, .25); border-radius: 5px; background-clip: padding-box; }
.zoomer { width: 36px; }
.zoom-btn { display: flex; align-items: center; justify-content: center; width: 100%; height: 31px; background: #fff; border-radius: 0 0 3px 3px; }
.zoom-btn:first-child { height: 32px; border-bottom: 1px solid #ccc; border-radius: 3px 3px 0 0; }
.layers { display: flex; align-items: center; justify-content: center; width: 50px; height: 51px; margin-top: 11px; background-color: #fff; }
.layers-ic { width: 28px; height: 28px; }
.scale { position: absolute; left: 5px; bottom: 52px; font-size: 12px; line-height: 15px; }
.scale-line {
  height: 17px;
  padding: 1px 7px;
  border: 2px solid #777;
  border-top: 0;
  background: rgba(255, 255, 255, .5);
  color: #333;
}
.km { width: 105px; height: 18px; }
.ft { width: 96px; border-bottom: 0; }

.inspector { display: flex; min-height: 0; border-left: 1px solid #ddd; }
.rail { width: 34px; flex: none; background: #ededed; }
.rail-btn {
  display: flex;
  align-items: center;
  width: 34px;
  height: 38px;
  padding-left: 8px;
  border-bottom: 1px solid #ddd;
  background: #fff;
  color: #666;
}
.rail-btn:first-child { height: 39px; }
.rail-btn.on { background: #337ab7; color: #fff; }
.panel { display: flex; flex-direction: column; flex: 1; min-width: 0; border-left: 1px solid #ddd; }
.panel .head { flex: none; }
.panel-scroll { display: flex; flex: 1; min-height: 0; }
.panel-body { display: flex; flex-direction: column; flex: 1; min-width: 0; padding-bottom: 21px; }
.fold {
  display: flex;
  align-items: center;
  gap: 10px;
  flex: none;
  height: 36px;
  padding: 0 15px 2px;
  border: 2px solid #d4d4d4;
  background: #afafaf;
  font-weight: 700;
}
.fold.open { gap: 17px; }
.add { display: flex; flex: none; padding-right: 10px; }
.add-box {
  flex: 1;
  min-width: 0;
  height: 36px;
  padding: 0 13px 1px;
  border: 1px solid #ccc;
  border-radius: 4px;
}
.add-box::placeholder { color: #999; opacity: 1; }
.add-btn {
  display: flex;
  align-items: center;
  justify-content: center;
  width: 40px;
  height: 36px;
  border: 1px solid #245580;
  border-radius: 4px;
  background: linear-gradient(#337ab7, #265a88);
  color: #fff;
}
.attrs { display: flex; flex: 1; min-height: 0; }
.attr-list { flex: 1; min-width: 0; padding-right: 13px; overflow: hidden; }
.inner-bar { width: 15px; padding: 11px 0; }
.group {
  display: flex;
  align-items: center;
  gap: 16px;
  width: 100%;
  height: 33px;
  padding: 0 21px 1px;
  border-bottom: 1px solid #b0b0b0;
  background: #e9e9e9;
}
.attr { margin-right: 3px; padding: 5px 0 2px 5px; border-bottom: 1px solid #ddd; }
.attr-top { display: flex; align-items: center; height: 30px; }
.name { align-self: flex-start; margin-right: auto; color: #222; font-weight: 700; }
.unit {
  padding: 0 2px;
  background: #808080;
  color: #fff;
  font-size: 13px;
  line-height: 24px;
  font-weight: 700;
}
.about { width: 15px; height: 15px; margin: 0 4px 0 8px; color: #0000b8; }
.act {
  display: flex;
  align-items: center;
  justify-content: center;
  width: 27px;
  height: 30px;
  border-radius: 4px;
  background: #f0f0f0;
}
.edit { width: 28px; margin-right: 3px; }
.field {
  display: block;
  width: 100%;
  height: 28px;
  margin-top: 2px;
  padding: 0 4px;
  border: 1px solid #858585;
  border-radius: 2px;
  color: #444;
}
.panel-bar { width: 17px; padding: 11px 0 30px; }
.panel-bar .thumb { height: 52%; }

.status {
  position: absolute;
  left: 402px;
  right: 0;
  bottom: 0;
  display: flex;
  height: 24px;
  background: rgba(240, 240, 240, .88);
  color: #555;
}
.stat { display: flex; align-items: center; width: 85px; padding-left: 11px; border-right: 1px solid #aaa; }
.stat.first { width: 106px; padding-left: 6px; gap: 11px; }
.ok { width: 15px; height: 15px; color: #138a13; }
.stat.sort { width: 26px; padding: 0; border: 0; }
.stat.clear { width: 74px; padding: 0; }
.stat.more { width: 37px; padding-left: 8px; border: 0; }
```
